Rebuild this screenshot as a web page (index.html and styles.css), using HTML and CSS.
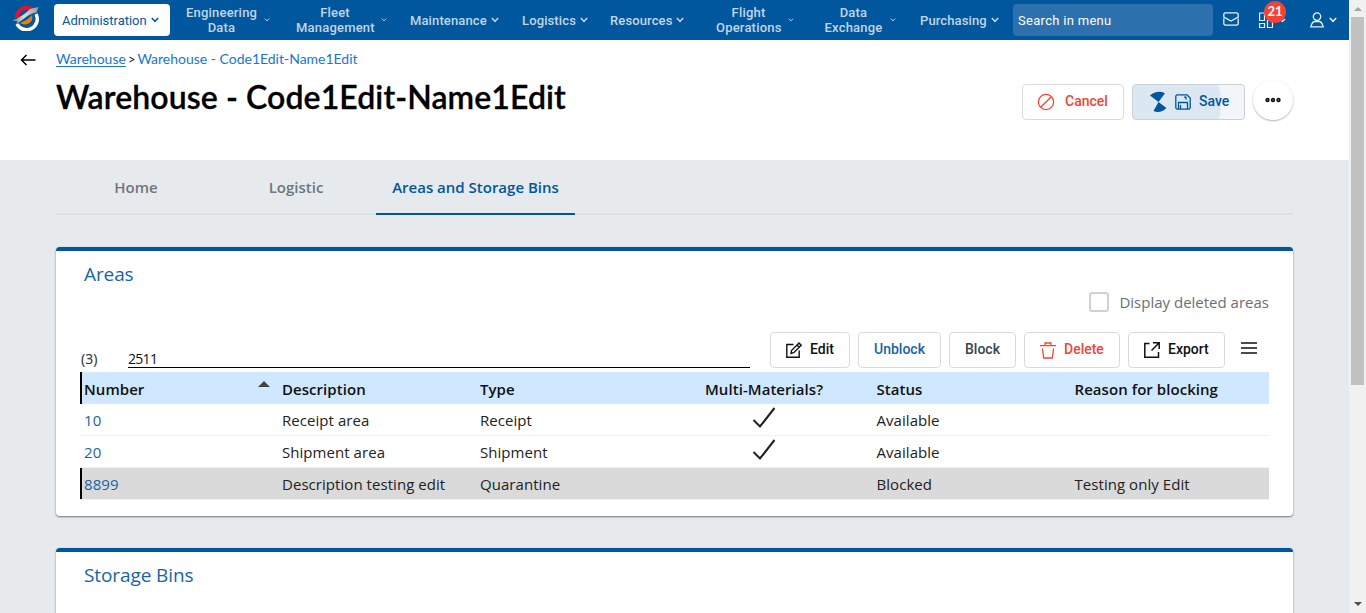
FILE: index.html
```html
<!DOCTYPE html>
<html lang="en">
<head>
<meta charset="utf-8">
<title>Warehouse - Code1Edit-Name1Edit</title>
<link rel="stylesheet" href="styles.css">
</head>
<body>
<svg width="0" height="0" class="defs">
  <symbol id="chev" viewBox="0 0 8 6"><path d="M.8 1 4 4.3 7.2 1" fill="none" stroke="currentColor" stroke-width="1.5"/></symbol>
  <symbol id="check" viewBox="0 0 24 24"><path d="M1.5 14 8 20.500 22.500 2" fill="none" stroke="currentColor" stroke-width="2.100"/></symbol>
</svg>
<div class="app">
  <div class="content">
    <header class="topbar">
      <svg class="logo" viewBox="0 0 28 26">
        <defs><linearGradient id="silver"><stop offset="0" stop-color="#777"/><stop offset=".45" stop-color="#ddd"/><stop offset="1" stop-color="#999"/></linearGradient></defs>
        <path d="M5 13A9.500 9.500 0 0 1 21 5.500" fill="none" stroke="#e8112d" stroke-width="4"/>
        <path d="M24 9A10.500 10.500 0 0 1 5 19" fill="none" stroke="#fff" stroke-width="3.500"/>
        <path d="M8 18C13 16 18 13 20 10 22 17 15 22 8 18Z" fill="#f57c00"/>
        <path d="M0 16C8 12.500 15 7.500 18 4L26.500 2 24.500 7.500C17 8 12 14.500 4 19L5.500 16Z" fill="url(#silver)"/>
      </svg>
      <nav class="menu">
        <a class="item active"><span>Administration</span><svg class="chev"><use href="#chev"/></svg></a>
        <a class="item"><span class="two w71">Engineering<br>Data</span><svg class="chev small"><use href="#chev"/></svg></a>
        <a class="item"><span class="two w78">Fleet<br>Management</span><svg class="chev small"><use href="#chev"/></svg></a>
        <a class="item"><span>Maintenance</span><svg class="chev"><use href="#chev"/></svg></a>
        <a class="item"><span>Logistics</span><svg class="chev"><use href="#chev"/></svg></a>
        <a class="item"><span>Resources</span><svg class="chev"><use href="#chev"/></svg></a>
        <a class="item"><span class="two w65">Flight<br>Operations</span><svg class="chev small"><use href="#chev"/></svg></a>
        <a class="item"><span class="two w59">Data<br>Exchange</span><svg class="chev small"><use href="#chev"/></svg></a>
        <a class="item"><span>Purchasing</span><svg class="chev"><use href="#chev"/></svg></a>
      </nav>
      <div class="search">Search in menu</div>
      <div class="tools">
        <svg class="mail" viewBox="0 0 16 14"><path d="M2 .8H14L15.200 2V5L8 9 .8 5V2ZM.8 6.500V12L2 13.200H14L15.200 12V6.500" fill="none" stroke="currentColor" stroke-width="1.300"/></svg>
        <div class="apps">
          <svg width="27" height="17" viewBox="0 0 27 17" fill="none" stroke="currentColor" stroke-width="1.200"><path d="M.6 1H5.500V8.500H.6ZM.6 11.500H5.500V15.500H.6ZM8.500 8.500H13.500V15.500H8.500ZM8.500 1H13.500V5.500H8.500ZM21 7.500 23.500 9.500 26 7"/></svg>
          <span class="badge">21</span>
        </div>
        <div class="user">
          <svg width="14" height="16" viewBox="0 0 14 16" fill="none" stroke="currentColor" stroke-width="1.300"><circle cx="7" cy="4.600" r="3.700"/><path d="M4.500 9.500H9.500Q12 10 13.200 14.800H.8Q2 10 4.500 9.500Z"/></svg>
          <svg class="chev"><use href="#chev"/></svg>
        </div>
      </div>
    </header>

    <section class="heading">
      <svg class="back" viewBox="0 0 16 12"><path d="M15.500 6H1.500M6.500 1 1.500 6 6.500 11" fill="none" stroke="#000" stroke-width="1.500"/></svg>
      <div class="titles">
        <div class="crumbs"><a class="up">Warehouse</a><span class="sep">&gt;</span><a class="here">Warehouse - Code1Edit-Name1Edit</a></div>
        <h1>Warehouse - Code1Edit-Name1Edit</h1>
      </div>
      <div class="page-actions">
        <button class="btn cancel"><svg width="18" height="18" viewBox="0 0 18 18" fill="none" stroke="currentColor" stroke-width="1.300"><circle cx="9" cy="9" r="7.600"/><path d="M3.700 14.300 14.300 3.700"/></svg>Cancel</button>
        <button class="btn save"><svg width="18" height="22" viewBox="0 0 18 22"><path d="M8.500 11 0 4.500Q7-1.500 15 2.200ZM8.500 11 16.500 17Q10.500 22.800 3.500 20Z" fill="currentColor"/></svg><svg class="disk" width="16" height="16" viewBox="0 0 16 16" fill="none" stroke="currentColor" stroke-width="1.300"><path d="M2 .8H12L15.200 4V14L14 15.200H2L.8 14V2ZM3.500 15V8.500H12.500V15M5.500 11V15M9 3.200H11V5.500"/></svg>Save</button>
        <button class="more"><svg width="18" height="6" viewBox="0 0 18 6" fill="#777" stroke="#111" stroke-width="1.400"><circle cx="3.500" cy="3" r="1.500"/><circle cx="9" cy="3" r="1.500"/><circle cx="14.500" cy="3" r="1.500"/></svg></button>
      </div>
    </section>

    <main>
      <div class="tabs"><a class="tab home">Home</a><a class="tab logistic">Logistic</a><a class="tab current">Areas and Storage Bins</a></div>

      <section class="card areas">
        <h2>Areas</h2>
        <label class="deleted"><span class="box"></span><span class="dlabel">Display deleted areas</span></label>
        <div class="toolbar">
          <span class="count">(3)</span>
          <div class="filter">2511</div>
          <div class="buttons">
            <button class="btn b-edit"><svg width="16" height="16" viewBox="0 0 16 16" fill="none" stroke="currentColor" stroke-width="1.400"><path d="M7.500 2.500H.8V15.200H13.200V8.500M5 11.500 5.500 8.500 13 1 15.200 3.200 8 10.500ZM11 3 13.200 5.200"/></svg>Edit</button>
            <button class="btn b-unblock">Unblock</button>
            <button class="btn b-block">Block</button>
            <button class="btn b-delete"><svg width="16" height="17" viewBox="0 0 16 17" fill="none" stroke="currentColor" stroke-width="1.300"><path d="M0 3.700H16M5 3.500V1H11V3.500M2.500 6.500 3.700 16H12.300L13.500 6.500"/></svg>Delete</button>
            <button class="btn b-export"><svg width="16" height="16" viewBox="0 0 16 16" fill="none" stroke="currentColor" stroke-width="1.500"><path d="M5.500 1.500H.8V15.200H14.500V10M9 .8H15.200V7M15 1 7.500 8.500"/></svg>Export</button>
            <svg class="burger" width="16" height="12" viewBox="0 0 16 12"><path d="M0 1H16M0 6H16M0 11H16" stroke="#111" stroke-width="1.600"/></svg>
          </div>
        </div>
        <div class="table">
          <div class="row head"><span>Number<i class="sort"></i></span><span>Description</span><span>Type</span><span class="mid">Multi-Materials?</span><span>Status</span><span>Reason for blocking</span></div>
          <div class="row"><a>10</a><span>Receipt area</span><span>Receipt</span><span class="mid"><svg class="check"><use href="#check"/></svg></span><span>Available</span><span></span></div>
          <div class="row"><a>20</a><span>Shipment area</span><span>Shipment</span><span class="mid"><svg class="check"><use href="#check"/></svg></span><span>Available</span><span></span></div>
          <div class="row selected"><a>8899</a><span>Description testing edit</span><span>Quarantine</span><span></span><span>Blocked</span><span>Testing only Edit</span></div>
        </div>
      </section>

      <section class="card bins"><h2>Storage Bins</h2></section>
    </main>
  </div>
  <aside class="scrollbar"><i class="arrow top"></i><i class="thumb"></i><i class="arrow bottom"></i></aside>
</div>
</body>
</html>
```
FILE: styles.css
```css
* { box-sizing: border-box; }
body { margin: 0; overflow: hidden; font-family: "Open Sans", sans-serif; }
h1, h2 { margin: 0; }
.defs { display: none; }
svg { display: block; flex: none; }
.app { display: flex; width: 1366px; height: 613px; overflow: hidden; background: #e6eaed; }
.content { width: 1349px; height: 613px; overflow: hidden; }

.topbar { display: flex; height: 40px; background: #00579d; color: #fff; padding-left: 12px; font: 500 13px/15px Roboto, sans-serif; }
.logo { width: 28px; height: 26px; margin: 5px 14px 0 0; }
.menu { display: grid; grid-template-columns: 132px 110px 114px 112px 88px 106px 108px 96px 93px; align-items: center; }
.item { display: flex; align-items: center; gap: 4px; color: #c0d5e7; white-space: nowrap; letter-spacing: .12px; }
.item.active { width: 116px; height: 32px; padding-left: 8px; background: #fff; color: #00579d; border-radius: 4px; font-weight: 400; letter-spacing: -.02px; }
.two { text-align: center; margin-right: 3px; letter-spacing: .2px; }
.w71 { width: 71px; } .w78 { width: 78px; } .w65 { width: 65px; } .w59 { width: 59px; }
.chev { width: 8px; height: 6px; }
.chev.small { width: 6px; height: 4px; }
.search { width: 200px; height: 32px; margin-top: 4px; padding: 9px 5px; background: #2d70ae; border-radius: 4px; font-weight: 400; letter-spacing: .3px; line-height: 15px; }
.tools { display: flex; padding: 12px 0 0 10px; color: #e8f0f7; }
.mail { width: 16px; height: 14px; }
.apps { position: relative; margin-left: 20px; }
.badge { position: absolute; left: 5px; top: -11px; width: 22px; height: 22px; border-radius: 50%; background: #f44336; color: #fff; text-align: center; font: 700 13px/21px Lato, sans-serif; }
.user { display: flex; gap: 5px; margin-left: 24px; }
.user .chev { margin-top: 5px; }

.heading { display: flex; height: 120px; background: #fff; padding-left: 20px; font-family: Lato, sans-serif; }
.back { width: 16px; height: 12px; margin: 14px 20px 0 0; }
.titles { flex: 1; padding-top: 10px; white-space: nowrap; }
.crumbs { display: flex; font-size: 14px; line-height: 18px; color: #1976d2; }
.up { text-decoration: underline; text-underline-offset: 2px; }
.here { letter-spacing: -.01px; }
.sep { margin: 0 2px; color: #222; font-size: 13px; }
h1 { margin-top: 9px; font: 600 32px/40px Lato, sans-serif; letter-spacing: .1px; color: #000; -webkit-text-stroke: .3px #000; }
.page-actions { display: flex; padding-top: 44px; margin-right: 56px; }
.btn { display: flex; align-items: center; height: 36px; padding: 0 0 2px 15px; border: 1px solid #d9dcdf; border-radius: 4px; background: #fff; font: 500 14px/16px Roboto, sans-serif; white-space: nowrap; }
.btn svg { position: relative; top: 1px; }
.cancel { width: 102px; gap: 10px; color: #f44336; padding-left: 14px; }
.save { width: 113px; margin-left: 8px; padding-left: 17px; color: #00579d; border-color: #c9d2da; background: radial-gradient(circle at 28px 18px, #dbe7f1 59.500px, #f2f6fa 60.500px); }
.disk { margin: 0 8px 0 7px; }
.more { display: flex; align-items: center; justify-content: center; width: 40px; height: 40px; margin: -4px 0 0 8px; padding: 0; border: 0; border-radius: 50%; background: #fff; box-shadow: 0 1px 2px rgba(0,0,0,.3); }

main { padding-left: 56px; }
.tabs { display: flex; width: 1237px; height: 55px; border-bottom: 2px solid #dce1e5; color: #6e767d; font-size: 15px; font-weight: 600; line-height: 20px; }
.tab { height: 55px; padding-top: 17px; white-space: nowrap; }
.home { width: 160px; text-align: center; }
.logistic { width: 160px; text-align: center; }
.current { width: 199px; text-align: center; color: #00579d; border-bottom: 2px solid #00579d; }
.card { width: 1237px; background: #fff; border-top: 4px solid #00579d; border-radius: 4px; box-shadow: 0 1px 2px rgba(0,0,0,.5); padding: 11px 24px 0; }
.areas { height: 269px; margin-top: 32px; }
.bins { height: 120px; margin-top: 32px; }
h2 { padding-left: 4px; color: #1764a7; font-size: 19px; font-weight: 400; line-height: 25px; letter-spacing: -.1px; }
.deleted { display: flex; justify-content: flex-end; align-items: center; height: 24px; margin-top: 3px; color: #6b7074; font-size: 15px; }
.box { width: 20px; height: 20px; margin-right: 10px; border: 2px solid #cbd2d9; border-radius: 3px; }
.toolbar { display: flex; height: 58px; font-size: 14px; line-height: 18px; }
.count { width: 48px; padding: 36px 0 0 1px; color: #333; font-family: "Noto Sans", sans-serif; }
.filter { width: 622px; height: 54px; padding-top: 36px; border-bottom: 1px solid #000; color: #111; letter-spacing: -.7px; }
.buttons { display: flex; padding: 18px 0 0 20px; }
.buttons .btn { margin-right: 8px; color: #111; }
.b-edit { width: 80px; gap: 8px; } .b-unblock { width: 83px; }
.buttons .b-unblock { color: #1764a7; }
.b-block { width: 67px; }
.buttons .b-block { color: #36454f; }
.b-delete { width: 96px; gap: 8px; }
.buttons .b-delete { color: #f44336; }
.b-export { width: 97px; gap: 8px; }
.burger { margin: 10px 0 0 8px; }
.table { width: 1189px; font-size: 15px; letter-spacing: .05px; color: #222; }
.row { display: grid; grid-template-columns: 198px 198px 198px 198.500px 198px 198.500px; height: 32px; border-bottom: 1px solid #f1f1f1; line-height: 33px; white-space: nowrap; }
.row > * { padding-left: 4px; }
.row a { color: #1764a7; }
.head { background: #cfe8ff; border-bottom: 0; color: #111; font-weight: 600; line-height: 35px; }
.head > span:first-child { display: flex; justify-content: space-between; }
.head, .selected { box-shadow: inset 2px 0 #000; }
.selected { background: #dadada; }
.sort { width: 0; height: 0; margin: 9px 8px 0 0; border: 6px solid transparent; border-top: 0; border-bottom-color: #444; }
.row .mid { padding-left: 0; margin-left: -22px; text-align: center; width: 224px; }
.mid:has(.check) { display: flex; justify-content: center; }
.check { width: 24px; height: 24px; margin-top: 2px; }

.scrollbar { position: relative; display: flex; flex-direction: column; align-items: center; width: 17px; height: 613px; background: #f1f1f1; }
.arrow { width: 0; height: 0; border: 4px solid transparent; }
.arrow.top { margin-top: 7px; border-top: 0; border-bottom-color: #a3a3a3; }
.thumb { width: 13px; height: 368px; margin-top: 6px; background: #c1c1c1; }
.arrow.bottom { margin-top: auto; margin-bottom: 7px; border-bottom: 0; border-top-color: #505050; }
```
